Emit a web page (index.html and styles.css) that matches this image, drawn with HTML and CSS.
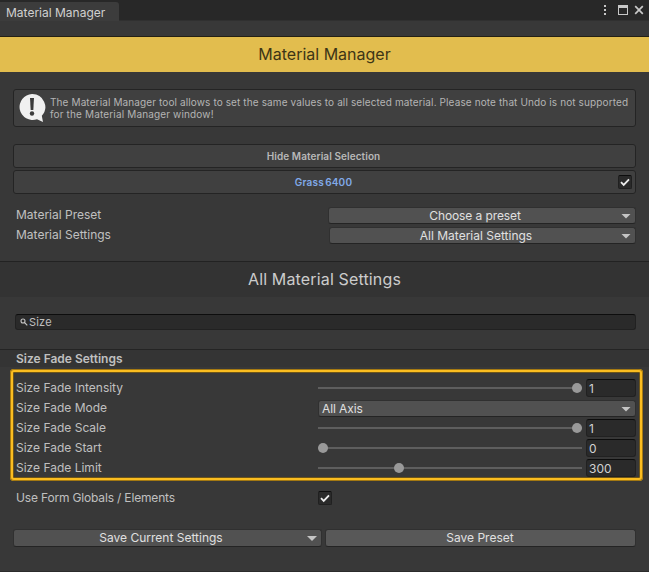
FILE: index.html
```html
<!DOCTYPE html>
<html lang="en">
<head>
<meta charset="utf-8">
<title>Material Manager</title>
<link rel="stylesheet" href="styles.css">
</head>
<body>
<div class="window">
  <header class="titlebar">
    <div class="tab"><span>Material Manager</span></div>
    <svg class="window-icons" width="44" height="14" viewBox="0 0 44 14">
      <g fill="#c8c8c8"><rect x="4" y="2" width="2" height="2"/><rect x="4" y="6" width="2" height="2"/><rect x="4" y="10" width="2" height="2"/>
      <path fill-rule="evenodd" d="M18 2h10v10H18zM19 5v6h8V5z"/></g>
      <path d="M35.200 3.200l7.600 7.600M42.800 3.200l-7.600 7.600" stroke="#c8c8c8" stroke-width="1.700"/>
    </svg>
  </header>
  <h1 class="banner"><span>Material Manager</span></h1>
  <section class="helpbox">
    <svg class="help-icon" width="28" height="30" viewBox="0 0 28 30">
      <path fill="#f0f0f0" d="M14 1a13 13 0 1 0 5 25.200l6 2.800-1.200-6.200A13 13 0 0 0 14 1z"/>
      <path fill="#3b3b3b" d="M12 5h4l-.7 12h-2.600z"/><circle cx="14" cy="20.500" r="2.200" fill="#3b3b3b"/>
    </svg>
    <p><span class="line help-one">The Material Manager tool allows to set the same values to all selected material. Please note that Undo is not supported</span><span class="line help-two">for the Material Manager window!</span></p>
  </section>
  <section class="selection">
    <div class="select-box"><span class="hide-text">Hide Material Selection</span></div>
    <div class="select-box blue"><span class="grass-text">Grass 6400</span>
      <span class="check picked"><svg width="14" height="14" viewBox="0 0 14 14"><path d="M3 7.200l2.700 2.700L11 4.300"/></svg></span></div>
  </section>
  <section class="options">
    <div class="option"><label>Material Preset</label><div class="dropdown preset"><span>Choose a preset</span><i class="arrow"></i></div></div>
    <div class="option"><label>Material Settings</label><div class="dropdown all"><span>All Material Settings</span><i class="arrow"></i></div></div>
  </section>
  <h2 class="section-title"><span>All Material Settings</span></h2>
  <div class="search"><svg width="8" height="8" viewBox="0 0 8 8"><circle cx="3" cy="3" r="2" /><path d="M4.500 4.500L7.300 7.300"/></svg><span>Size</span></div>
  <h3 class="subtitle"><span>Size Fade Settings</span></h3>
  <section class="fade">
    <div class="row"><label>Size Fade Intensity</label><div class="slider"><i class="knob" style="left:254px"></i></div><div class="field">1</div></div>
    <div class="row"><label>Size Fade Mode</label><div class="dropdown axis"><span>All Axis</span><i class="arrow"></i></div></div>
    <div class="row"><label>Size Fade Scale</label><div class="slider"><i class="knob" style="left:254px"></i></div><div class="field">1</div></div>
    <div class="row"><label>Size Fade Start</label><div class="slider"><i class="knob" style="left:0px"></i></div><div class="field">0</div></div>
    <div class="row"><label>Size Fade Limit</label><div class="slider"><i class="knob" style="left:76px"></i></div><div class="field">300</div></div>
  </section>
  <div class="globals"><label>Use Form Globals / Elements</label><span class="check"><svg width="14" height="14" viewBox="0 0 14 14"><path d="M3 7.200l2.700 2.700L11 4.300"/></svg></span></div>
  <footer class="actions">
    <div class="dropdown current"><span>Save Current Settings</span><i class="arrow"></i></div>
    <div class="dropdown save"><span>Save Preset</span></div>
  </footer>
</div>
</body>
</html>
```
FILE: styles.css
```css
* { box-sizing: border-box; }
body { margin: 0; background: #383838; color: #c0c0c0; font: 12px/16px Inter, "Liberation Sans", sans-serif; }
h1, h2, h3, p { margin: 0; font-weight: 400; }
span, label { white-space: nowrap; }
svg { display: block; flex: none; }
.window { width: 649px; height: 572px; display: flex; flex-direction: column; background: #383838; border-bottom: 1px solid #2b2b2b; overflow: hidden; }
.titlebar { height: 21px; flex: none; background: #282828; display: flex; justify-content: space-between; border-bottom: 1px solid #303030; }
.tab { width: 119px; height: 19px; margin-top: 2px; padding: 3px 0 0 6px; background: #3c3c3c; border-radius: 0 3px 0 0; color: #d0d0d0; }
.window-icons { margin: 3px 5px 0 0; }
.banner { height: 36px; flex: none; margin-top: 15px; border-top: 1px solid #242014; background: #e2bd4e; color: #3d3516; font-size: 16px; line-height: 35px; text-align: center; }
.helpbox { height: 38px; flex: none; margin: 17px 13px 0; border: 1px solid #242424; border-radius: 3px; background: #404040; display: flex; padding: 3px 0 0 4px; color: #b4b4b4; font-size: 10px; line-height: 12px; }
.helpbox p { padding: 3px 0 0 4px; }
.line { display: block; }
.help-one { letter-spacing: .117px; }
.help-two { letter-spacing: .15px; }
.selection { flex: none; margin: 17px 13px 0; display: grid; gap: 2px; }
.select-box { position: relative; height: 24px; border: 1px solid #242424; border-radius: 3px; background: #404040; text-align: center; font-size: 10px; line-height: 23px; font-weight: 600; color: #b8b8b8; }
.hide-text { letter-spacing: .08px; padding-right: 2px; }
.blue { color: #80aae8; }
.grass-text { letter-spacing: .2px; word-spacing: -1.5px; padding-right: 2px; }
.check { display: block; width: 14px; height: 14px; border: 1px solid #202020; border-top-color: #0d0d0d; border-radius: 2px; background: #2a2a2a; }
.check svg { margin: -1px; }
.check path { fill: none; stroke: #ececec; stroke-width: 1.8; }
.picked { position: absolute; right: 3px; top: 4px; }
.options { flex: none; margin: 12px 13px 0 16px; display: grid; gap: 2px; }
.option { height: 18px; display: flex; align-items: center; justify-content: space-between; }
.dropdown { position: relative; height: 17px; background: #515151; border: 1px solid #303030; border-bottom-color: #242424; border-radius: 3px; text-align: center; color: #e0e0e0; line-height: 16px; }
.preset { width: 308px; padding-right: 14px; letter-spacing: -.1px; }
.all { width: 307px; padding-right: 13px; }
.arrow { position: absolute; right: 4px; top: 6px; width: 10px; height: 5px; background: #c4c4c4; clip-path: polygon(0 0, 100% 0, 50% 100%); }
.section-title { height: 36px; flex: none; margin-top: 17px; border-top: 1px solid #222; background: #333; color: #ccc; font-size: 16px; line-height: 35px; text-align: center; letter-spacing: .15px; }
.search { height: 16px; flex: none; margin: 17px 13px 0 15px; padding-left: 4px; border: 1px solid #212121; border-top-color: #0d0d0d; border-radius: 3px; background: #2a2a2a; display: flex; align-items: center; gap: 1px; font-size: 11px; letter-spacing: .2px; }
.search svg { fill: none; stroke: #c4c4c4; stroke-width: 1.1; }
.subtitle { height: 18px; flex: none; margin-top: 19px; padding-left: 16px; border-top: 1px solid #242424; background: #343434; font-size: 12px; font-weight: 600; line-height: 18px; }
.fade { position: relative; height: 112px; flex: none; margin: 2px 6px 0 10px; padding: 9px 7px 0 6px; border-radius: 4px; box-shadow: inset 0 0 0 1px #a47912, inset 0 0 0 3px #fbbd20, inset 0 0 0 4px #6e5518; }
.row { height: 20px; display: flex; align-items: center; }
.row label, .globals label { width: 302px; flex: none; }
.globals label { letter-spacing: -.17px; }
.slider { position: relative; width: 264px; height: 2px; background: #5e5e5e; }
.knob { position: absolute; top: -4px; width: 10px; height: 10px; border-radius: 50%; background: #999; }
.field { width: 50px; height: 18px; margin-left: 4px; padding-left: 2px; border: 1px solid #212121; border-top-color: #0d0d0d; border-radius: 3px; background: #2a2a2a; color: #d2d2d2; line-height: 18px; }
.axis { width: 318px; text-align: left; padding-left: 3px; letter-spacing: -.1px; }
.globals { height: 20px; flex: none; margin: 7px 16px 0; display: flex; align-items: center; }
.actions { flex: none; margin: 21px 13px 0; display: flex; gap: 3px; }
.actions .dropdown { height: 18px; }
.current { width: 309px; padding-right: 13px; }
.save { width: 311px; padding-right: 1px; background: #585858; }
```
